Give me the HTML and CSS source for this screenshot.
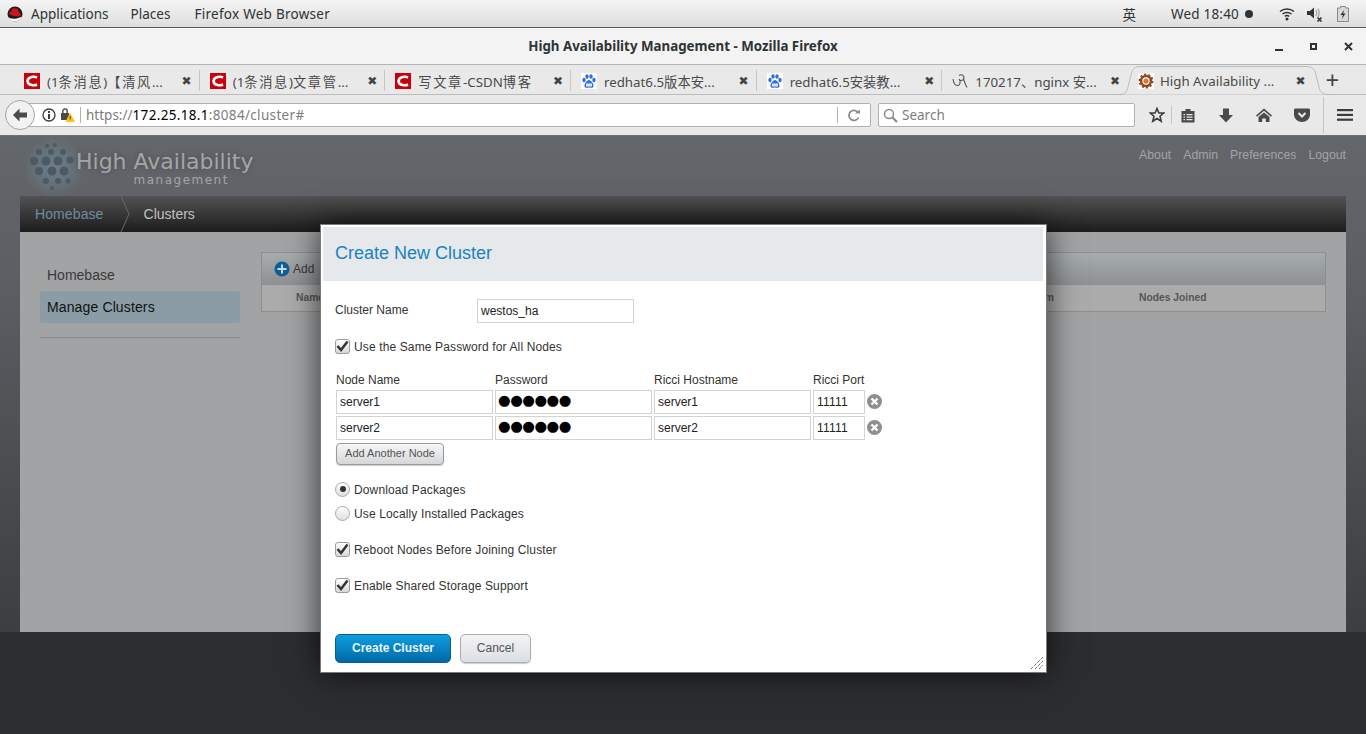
FILE: index.html
```html
<!DOCTYPE html>
<html lang="en">
<head>
    <meta charset="UTF-8">
    <title>High Availability Management - Mozilla Firefox</title>
    <link rel="stylesheet" href="styles.css">
</head>
<body>
    <!-- GNOME top bar -->
    <div class="topbar">
        <svg class="rh-logo" width="16" height="16" viewBox="0 0 16 16">
            <circle cx="8" cy="8" r="7.500" fill="#1c1c1c"/>
            <path d="M0.800 10.500C3 13 8 14 15 10.500C14 14 11 15.500 8 15.500C4.500 15.500 1.800 13.500 0.800 10.500Z" fill="#f4f4f4"/>
            <path d="M2 7.500C2.500 6 3.500 5.800 4.500 5.500C5 3 6 1.800 7.500 2.200C8.500 2.500 9.500 2.500 10 2.500C11 2.800 11.500 5 12 6.500C13 7 14 7.800 13.800 9C13 10.500 10 10.800 7.500 10C5 9.200 2 8.500 2 7.500Z" fill="#d3121f"/>
        </svg>
        <span class="topbar-item first">Applications</span>
        <span class="topbar-item">Places</span>
        <span class="topbar-item app-name">Firefox Web Browser</span>
        <div class="topbar-right">
            <span class="ime">英</span>
            <span class="clock">Wed 18:40</span>
            <span class="clock-dot"></span>
            <svg class="tray wifi" width="16" height="14" viewBox="0 0 16 14" fill="none" stroke="#2e3436" stroke-width="1.500">
                <path d="M1 4.500C5 1 11 1 15 4.500"/>
                <path d="M3.500 7C6 5 10 5 12.500 7"/>
                <path d="M5.800 9.300C7 8.500 9 8.500 10.200 9.300"/>
                <circle cx="8" cy="12" r="1.500" fill="#2e3436" stroke="none"/>
            </svg>
            <svg class="tray vol" width="17" height="16" viewBox="0 0 17 16">
                <path d="M1 5H4L8 1.500V12.500L4 9H1Z" fill="#2e3436"/>
                <path d="M10 4C11 6 11 8 10 10M12 2.500C13.500 5.500 13.500 8.500 12 11.500" fill="none" stroke="#a0a0a0" stroke-width="1.200"/>
                <path d="M11.500 11.500L15.500 15.500M15.500 11.500L11.500 15.500" stroke="#2e3436" stroke-width="1.600"/>
            </svg>
            <svg class="tray batt" width="12" height="16" viewBox="0 0 12 16">
                <path d="M3.500 0.500H8.500V2H11.500V15.500H0.500V2H3.500Z" fill="#d8d8d8" stroke="#8a8a8a"/>
                <path d="M7 4L3.500 9H5.800L5 13L8.500 7.500H6.200Z" fill="#2e3436"/>
            </svg>
        </div>
    </div>

    <!-- Window title -->
    <div class="titlebar">
        <span class="title">High Availability Management - Mozilla Firefox</span>
        <div class="win-buttons">
            <svg width="9" height="9" viewBox="0 0 9 9"><rect x="0" y="7" width="8" height="2" fill="#2e3436"/></svg>
            <svg width="8" height="8" viewBox="0 0 8 8"><rect x="1" y="1" width="5" height="5" fill="none" stroke="#2e3436" stroke-width="2"/></svg>
            <svg width="9" height="9" viewBox="0 0 9 9"><path d="M1 1L8 8M8 1L1 8" stroke="#2e3436" stroke-width="2"/></svg>
        </div>
    </div>

    <!-- Tabs -->
    <div class="tabstrip">
        <div class="tab">
            <svg class="fav" viewBox="0 0 16 16"><rect width="16" height="16" fill="#c8000b"/><path d="M13 4.500C11 3.500 4 3 3.500 8C4 13 11 12.500 13 11.500" fill="none" stroke="#fff" stroke-width="2.600"/></svg>
            <span class="tab-label">(1<span class="cjk">条消息</span>)<span class="cjk">【清风</span>...</span>
            <span class="tab-close">✖</span>
        </div>
        <div class="tab">
            <svg class="fav" viewBox="0 0 16 16"><rect width="16" height="16" fill="#c8000b"/><path d="M13 4.500C11 3.500 4 3 3.500 8C4 13 11 12.500 13 11.500" fill="none" stroke="#fff" stroke-width="2.600"/></svg>
            <span class="tab-label">(1<span class="cjk">条消息</span>)<span class="cjk">文章管</span>...</span>
            <span class="tab-close">✖</span>
        </div>
        <div class="tab">
            <svg class="fav" viewBox="0 0 16 16"><rect width="16" height="16" fill="#c8000b"/><path d="M13 4.500C11 3.500 4 3 3.500 8C4 13 11 12.500 13 11.500" fill="none" stroke="#fff" stroke-width="2.600"/></svg>
            <span class="tab-label"><span class="cjk">写文章</span>-CSDN<span class="cjk">博客</span></span>
            <span class="tab-close">✖</span>
        </div>
        <div class="tab">
            <svg class="fav" viewBox="0 0 16 16"><rect width="16" height="16" fill="#fff"/><g fill="#2f6fe0"><ellipse cx="3" cy="7" rx="1.700" ry="2.200"/><ellipse cx="6" cy="3.500" rx="1.700" ry="2.200"/><ellipse cx="10" cy="3.500" rx="1.700" ry="2.200"/><ellipse cx="13" cy="7" rx="1.700" ry="2.200"/><path d="M8 7C10 7 13 11 12.500 13.500C12 15.500 9.500 14.500 8 14.500C6.500 14.500 4 15.500 3.500 13.500C3 11 6 7 8 7Z"/></g><rect x="5" y="10.500" width="6" height="3" fill="#dce8fb"/></svg>
            <span class="tab-label">redhat6.5版本安...</span>
            <span class="tab-close">✖</span>
        </div>
        <div class="tab">
            <svg class="fav" viewBox="0 0 16 16"><rect width="16" height="16" fill="#fff"/><g fill="#2f6fe0"><ellipse cx="3" cy="7" rx="1.700" ry="2.200"/><ellipse cx="6" cy="3.500" rx="1.700" ry="2.200"/><ellipse cx="10" cy="3.500" rx="1.700" ry="2.200"/><ellipse cx="13" cy="7" rx="1.700" ry="2.200"/><path d="M8 7C10 7 13 11 12.500 13.500C12 15.500 9.500 14.500 8 14.500C6.500 14.500 4 15.500 3.500 13.500C3 11 6 7 8 7Z"/></g><rect x="5" y="10.500" width="6" height="3" fill="#dce8fb"/></svg>
            <span class="tab-label">redhat6.5安装教...</span>
            <span class="tab-close">✖</span>
        </div>
        <div class="tab">
            <svg class="fav" viewBox="0 0 16 16" fill="none" stroke="#555" stroke-width="1.100"><path d="M1 6C1.500 10 3 12 5 12.500C8 13 9 9 7.500 6M7 2.500C10 0.500 13 3 11.500 6C10.500 8 8 8 7 6.500M11.500 6C12.500 9 13.500 12 15 14.500"/></svg>
            <span class="tab-label">170217、nginx 安...</span>
            <span class="tab-close">✖</span>
        </div>
        <div class="tab active">
            <svg class="tab-shape" width="210" height="30" viewBox="0 0 210 30"><path d="M0 29.500C6 29.500 8 27 9 22L12 10C13 4 16 1.500 21 1.500H187C193 1.500 196 4 197 10L200 22C201 27 203 29.500 210 29.500" fill="#e9e9e9" stroke="#b7bdc4"/></svg>
            <svg class="fav" viewBox="0 0 16 16"><rect width="16" height="16" fill="#fff"/><circle cx="8" cy="8" r="5" fill="none" stroke="#8d4a25" stroke-width="2.600"/><circle cx="8" cy="8" r="6.700" fill="none" stroke="#8d4a25" stroke-width="1.600" stroke-dasharray="2.200 2"/><circle cx="8" cy="8" r="2.600" fill="#e0752d"/></svg>
            <span class="tab-label">High Availability ...</span>
            <span class="tab-close">✖</span>
        </div>
        <span class="new-tab">+</span>
    </div>

    <!-- Navigation toolbar -->
    <div class="navbar">
        <div class="back-btn">
            <svg width="16" height="14" viewBox="0 0 16 14"><path d="M7.500 0.500L1 7L7.500 13.500V9.500H15V4.500H7.500Z" fill="#4a4a4a"/></svg>
        </div>
        <div class="urlbar">
            <svg class="url-icon" width="14" height="14" viewBox="0 0 14 14"><circle cx="7" cy="7" r="6" fill="none" stroke="#3a3a3a" stroke-width="1.300"/><rect x="6" y="6" width="2" height="5" fill="#3a3a3a"/><rect x="6" y="3" width="2" height="2" fill="#3a3a3a"/></svg>
            <svg class="url-lock" width="15" height="14" viewBox="0 0 15 14"><path d="M1 5H9V12H1Z" fill="#4a4a4a"/><path d="M2.800 5V3C2.800 0.300 7.200 0.300 7.200 3V5" fill="none" stroke="#4a4a4a" stroke-width="1.400"/><path d="M10 4.500L15 14H5.500Z" fill="#fcc31c"/><rect x="9.700" y="8" width="1" height="3.500" fill="#444"/></svg>
            <span class="url-sep"></span>
            <span class="url-text"><span class="scheme">https://</span>172.25.18.1<span class="dim">:8084/cluster#</span></span>
            <span class="url-sep right"></span>
            <svg class="reload" width="14" height="13" viewBox="0 0 14 13" fill="none"><path d="M11.500 8.500A5 5 0 1 1 11 3.500" stroke="#8a8a8a" stroke-width="1.800"/><path d="M8 4.500H13V0.500Z" fill="#8a8a8a"/></svg>
        </div>
        <div class="searchbar">
            <svg width="15" height="15" viewBox="0 0 15 15" fill="none" stroke="#8a8a8a"><circle cx="6" cy="6" r="4.500" stroke-width="1.500"/><path d="M9.500 9.500L14 14" stroke-width="2.200"/></svg>
            <span>Search</span>
        </div>
        <div class="nav-icons">
            <svg class="i-star" width="16" height="16" viewBox="0 0 16 16"><path d="M8 1.500L9.900 6H14.800L11 9.200L12.200 14.200L8 11.500L3.800 14.200L5 9.200L1.200 6H6.100Z" fill="none" stroke="#3c3c3c" stroke-width="1.600"/></svg>
            <span class="nav-sep"></span>
            <svg class="i-list" width="14" height="15" viewBox="0 0 14 15"><path d="M0.500 3H4.500V1H9.500V3H13.500V14.500H0.500Z" fill="#4a4a4a"/><path d="M2.500 6H4V7.300H2.500ZM5.500 6H11.500V7.300H5.500ZM2.500 8.500H4V9.800H2.500ZM5.500 8.500H11.500V9.800H5.500ZM2.500 11H4V12.300H2.500ZM5.500 11H11.500V12.300H5.500Z" fill="#e8e8e8"/></svg>
            <svg class="i-down" width="14" height="15" viewBox="0 0 14 15"><path d="M4 0.500H10V7H14L7 14.500L0 7H4Z" fill="#4a4a4a"/></svg>
            <svg class="i-home" width="16" height="14" viewBox="0 0 16 14"><path d="M8 0.500L16 7.500L15 8.800L8 2.800L1 8.800L0 7.500Z" fill="#4a4a4a"/><path d="M8 4.500L13.500 9V14H9.800V10.500H6.200V14H2.500V9Z" fill="#4a4a4a"/></svg>
            <svg class="i-pocket" width="16" height="14" viewBox="0 0 16 14"><path d="M1.500 0.500H14.500C15.300 0.500 16 1 16 2V6.500C16 11 12 14 8 14C4 14 0 11 0 6.500V2C0 1 0.700 0.500 1.500 0.500Z" fill="#4a4a4a"/><path d="M4.500 5L8 8.500L11.500 5" fill="none" stroke="#e8e8e8" stroke-width="2"/></svg>
            <span class="nav-sep tall"></span>
            <svg class="i-menu" width="16" height="12" viewBox="0 0 16 12"><rect width="16" height="2.200" y="0" fill="#3c3c3c"/><rect width="16" height="2.200" y="4.800" fill="#3c3c3c"/><rect width="16" height="2.200" y="9.600" fill="#3c3c3c"/></svg>
        </div>
    </div>

    <!-- Luci page behind the dialog -->
    <div class="page">
        <div class="page-header">
            <div class="logo">
                <svg class="logo-mark" width="64" height="64" viewBox="0 0 64 64">
                    <defs>
                        <radialGradient id="glow"><stop offset="0" stop-color="#6f8c9f" stop-opacity=".7"/><stop offset="1" stop-color="#6f8c9f" stop-opacity="0"/></radialGradient>
                    </defs>
                    <circle cx="32" cy="32" r="32" fill="url(#glow)"/>
                    <g fill="#4d5a63">
                        <circle cx="25" cy="11" r="2"/><circle cx="33" cy="10" r="2"/><circle cx="17" cy="17" r="3"/><circle cx="29" cy="17" r="3"/><circle cx="41" cy="17" r="3"/>
                        <circle cx="12" cy="26" r="4"/><circle cx="24" cy="26" r="4.500"/><circle cx="36" cy="26" r="4.500"/><circle cx="48" cy="25" r="3.500"/>
                        <circle cx="17" cy="36" r="4"/><circle cx="30" cy="36" r="4.500"/><circle cx="42" cy="36" r="4.500"/>
                        <circle cx="24" cy="46" r="3"/><circle cx="36" cy="46" r="3"/><circle cx="46" cy="46" r="2.500"/><circle cx="30" cy="53" r="2"/>
                    </g>
                </svg>
                <div class="logo-text">
                    <span class="logo-title">High Availability</span>
                    <span class="logo-sub">management</span>
                </div>
            </div>
            <div class="top-links">
                <span>About</span>
                <span>Admin</span>
                <span>Preferences</span>
                <span>Logout</span>
            </div>
        </div>

        <div class="breadcrumb">
            <span class="crumb-link">Homebase</span>
            <svg class="crumb-sep" width="10" height="36" viewBox="0 0 10 36"><path d="M1 0L9 18L1 36" fill="none" stroke="#6a6a6a"/></svg>
            <span class="crumb-current">Clusters</span>
        </div>

        <div class="content">
            <div class="sidebar">
                <div class="side-item">Homebase</div>
                <div class="side-item selected">Manage Clusters</div>
                <div class="side-rule"></div>
            </div>
            <div class="cluster-panel">
                <div class="panel-toolbar">
                    <svg width="16" height="16" viewBox="0 0 16 16"><circle cx="8" cy="8" r="7.500" fill="#0e5f93"/><path d="M7 3.500H9V7H12.500V9H9V12.500H7V9H3.500V7H7Z" fill="#c9dbe6"/></svg>
                    <span>Add</span>
                </div>
                <div class="panel-head">
                    <span class="col-name">Name</span>
                    <span class="col-platform">Platform</span>
                    <span class="col-joined">Nodes Joined</span>
                </div>
            </div>
        </div>
    </div>
    <div class="page-foot"></div>

    <!-- Create cluster dialog -->
    <div class="modal">
        <div class="modal-header">Create New Cluster</div>
        <div class="modal-body">
            <div class="name-row">
                <span class="name-label">Cluster Name</span>
                <div class="field name-field">westos_ha</div>
            </div>

            <label class="check-row same-pass"><span class="checkbox"><svg width="13" height="12" viewBox="0 0 13 12"><path d="M1.500 6L5 10L11.500 1.500" fill="none" stroke="#333" stroke-width="2.500"/></svg></span>Use the Same Password for All Nodes</label>

            <div class="node-grid">
                <span>Node Name</span><span>Password</span><span>Ricci Hostname</span><span>Ricci Port</span><span></span>

                <div class="field">server1</div>
                <div class="field dots">●●●●●●</div>
                <div class="field">server1</div>
                <div class="field port">11111</div>
                <svg class="remove" width="15" height="15" viewBox="0 0 15 15"><circle cx="7.500" cy="7.500" r="7.500" fill="#8f8f8f"/><path d="M4.500 4.500L10.500 10.500M10.500 4.500L4.500 10.500" stroke="#fff" stroke-width="2.400"/></svg>

                <div class="field">server2</div>
                <div class="field dots">●●●●●●</div>
                <div class="field">server2</div>
                <div class="field port">11111</div>
                <svg class="remove" width="15" height="15" viewBox="0 0 15 15"><circle cx="7.500" cy="7.500" r="7.500" fill="#8f8f8f"/><path d="M4.500 4.500L10.500 10.500M10.500 4.500L4.500 10.500" stroke="#fff" stroke-width="2.400"/></svg>
            </div>

            <button class="add-node">Add Another Node</button>

            <label class="check-row download"><span class="radio on"></span>Download Packages</label>
            <label class="check-row local"><span class="radio"></span>Use Locally Installed Packages</label>
            <label class="check-row reboot"><span class="checkbox"><svg width="13" height="12" viewBox="0 0 13 12"><path d="M1.500 6L5 10L11.500 1.500" fill="none" stroke="#333" stroke-width="2.500"/></svg></span>Reboot Nodes Before Joining Cluster</label>
            <label class="check-row shared"><span class="checkbox"><svg width="13" height="12" viewBox="0 0 13 12"><path d="M1.500 6L5 10L11.500 1.500" fill="none" stroke="#333" stroke-width="2.500"/></svg></span>Enable Shared Storage Support</label>

            <div class="modal-actions">
                <button class="btn-create">Create Cluster</button>
                <button class="btn-cancel">Cancel</button>
            </div>
        </div>
        <svg class="grip" width="12" height="12" viewBox="0 0 12 12" stroke="#333" stroke-dasharray="1 1"><path d="M0 12L12 0M4 12L12 4M8 12L12 8"/></svg>
    </div>
</body>
</html>
```

FILE: styles.css
```css
html, body {
    margin: 0;
    padding: 0;
    height: 734px;
    overflow: hidden;
}

body {
    font-family: "Liberation Sans", sans-serif;
    font-size: 12px;
    color: #333;
    background-color: #2c2d2f;
    position: relative;
}

/* GNOME top bar */
.topbar {
    height: 27px;
    display: flex;
    align-items: center;
    background: linear-gradient(#f4f4f4, #dedede);
    border-bottom: 1px solid #55585a;
    font-family: "Noto Sans", "Noto Sans CJK SC", sans-serif;
    font-size: 13.5px;
    color: #2e3436;
}

.rh-logo {
    margin-left: 7px;
}

.topbar-item {
    margin-left: 22px;
}

.topbar-item.first {
    margin-left: 8px;
}

.topbar-item.app-name {
    margin-left: 24px;
    letter-spacing: .27px;
}

.topbar-right {
    margin-left: auto;
    display: flex;
    align-items: center;
}

.ime {
    margin-right: 35px;
}

.clock {
    letter-spacing: .2px;
}

.clock-dot {
    width: 8px;
    height: 8px;
    margin: 0 26px 0 6px;
    border-radius: 50%;
    background-color: #2e3436;
}

.tray.vol {
    margin-left: 11px;
}

.tray.batt {
    margin: 0 17px 0 14px;
}

/* Window title */
.titlebar {
    height: 33px;
    padding-bottom: 2px;
    display: flex;
    align-items: center;
    justify-content: center;
    position: relative;
    background-color: #f3f3f3;
    border-top: 1px solid #fff;
    border-bottom: 1px solid #b4b4b4;
    font-family: "Noto Sans", sans-serif;
    font-size: 13.33px;
    font-weight: bold;
    color: #2e3436;
}

.win-buttons {
    position: absolute;
    right: 13px;
    top: 13px;
    display: flex;
    gap: 26px;
    align-items: center;
}

/* Tabs */
.tabstrip {
    height: 29px;
    padding-left: 14px;
    display: flex;
    background-color: #e9e9e9;
    border-bottom: 1px solid #bdbdbd;
    font-family: "Noto Sans", "Noto Sans CJK SC", sans-serif;
    font-size: 13.3px;
    color: #4a4a4a;
    position: relative;
}

.tab {
    flex: 0 0 185.67px;
    box-sizing: border-box;
    height: 29px;
    display: flex;
    align-items: center;
    padding: 3px 8px 0 10px;
    position: relative;
}

.tab::after {
    content: "";
    position: absolute;
    right: 0;
    top: 5px;
    height: 21px;
    width: 1px;
    background-color: #c6c6c6;
}

.tab:nth-child(6)::after {
    display: none;
}

.tab.active::after {
    display: none;
}

.tab-shape {
    position: absolute;
    left: -9px;
    top: 0;
}

.fav {
    width: 16px;
    height: 16px;
    flex: none;
    position: relative;
}

.tab-label {
    margin-left: 7px;
    white-space: nowrap;
    flex: 1;
    overflow: hidden;
    position: relative;
}

.tab.active .tab-label {
    margin-left: 6px;
}

.cjk {
    letter-spacing: 1.6px;
}

.tab-close {
    font-family: "DejaVu Sans", sans-serif;
    font-size: 12px;
    color: #444;
    position: relative;
}

.new-tab {
    font-size: 24px;
    line-height: 29px;
    margin-left: 12px;
    position: relative;
    color: #444;
}

/* Navigation toolbar */
.navbar {
    height: 40px;
    display: flex;
    align-items: center;
    background-color: #e9e9e9;
    border-bottom: 1px solid #6e7173;
    position: relative;
    font-family: "Noto Sans", sans-serif;
    font-size: 13.5px;
}

.back-btn {
    position: absolute;
    left: 5px;
    top: 5px;
    width: 30px;
    height: 30px;
    box-sizing: border-box;
    border: 1px solid #a4a4a4;
    border-radius: 50%;
    background-color: #f2f2f2;
    display: flex;
    align-items: center;
    justify-content: center;
}

.urlbar {
    margin-left: 20px;
    width: 851px;
    height: 24px;
    box-sizing: border-box;
    display: flex;
    align-items: center;
    background-color: #fff;
    border: 1px solid #b1b1b1;
    border-radius: 2px;
    padding-left: 21px;
}

.url-icon {
    flex: none;
}

.url-lock {
    margin-left: 4px;
    flex: none;
}

.url-sep {
    width: 1px;
    height: 16px;
    margin: 0 5px 0 5px;
    background-color: #b1b1b1;
}

.url-text {
    color: #000;
    white-space: nowrap;
    flex: 1;
    letter-spacing: .33px;
}

.url-text .dim {
    color: #7d7d7d;
}

.url-text .scheme {
    color: #7d7d7d;
    letter-spacing: 0;
}

.url-sep.right {
    margin: 0 9px 0 0;
}

.reload {
    margin-right: 9px;
}

.searchbar {
    margin-left: 7px;
    width: 257px;
    height: 24px;
    box-sizing: border-box;
    display: flex;
    align-items: center;
    gap: 4px;
    padding-left: 4px;
    background-color: #fff;
    border: 1px solid #b1b1b1;
    border-radius: 2px;
    color: #7d7d7d;
}

.nav-icons {
    display: flex;
    align-items: center;
    height: 100%;
    flex: 1;
    position: relative;
}

.i-star { margin-left: 14px; }
.nav-sep { width: 1px; height: 18px; margin-left: 6px; background-color: #c6c6c6; }
.i-list { margin-left: 9px; }
.i-down { margin-left: 24px; }
.i-home { margin-left: 23px; }
.i-pocket { margin-left: 22px; }
.nav-sep.tall { height: 36px; margin-left: 13px; }
.i-menu { margin-left: 13px; }

/* Luci page */
.page {
    height: 496px;
    padding: 0 20px;
    display: flex;
    flex-direction: column;
    background: linear-gradient(#63666a, #5b5e62 30%, #3c3e41);
}

.page-header {
    height: 60px;
    display: flex;
    justify-content: space-between;
    flex: none;
}

.logo {
    display: flex;
    position: relative;
}

.logo-mark {
    margin: -1px 0 0 2px;
    flex: none;
}

.logo-text {
    margin-left: -10px;
    display: flex;
    flex-direction: column;
    align-items: center;
    color: #a3a5a7;
}

.logo-title {
    font-family: "DejaVu Sans", sans-serif;
    font-size: 22px;
    line-height: 25px;
    margin-top: 13px;
    text-shadow: 0 0 6px rgba(0, 0, 0, .25);
}

.logo-sub {
    font-family: "DejaVu Sans", sans-serif;
    font-size: 12px;
    line-height: 12px;
    letter-spacing: 1.5px;
    margin-left: 33px;
}

.top-links {
    display: flex;
    gap: 12px;
    padding-top: 12px;
    color: #a2a4a6;
    line-height: 14px;
    font-size: 12.3px;
}

.breadcrumb {
    height: 36px;
    display: flex;
    align-items: center;
    flex: none;
    padding-left: 15px;
    background: linear-gradient(#525252, #1c1c1c);
    font-size: 14px;
}

.crumb-link {
    color: #6f8c9f;
    letter-spacing: .1px;
}

.crumb-sep {
    margin-left: 16px;
}

.crumb-current {
    margin-left: 14px;
    color: #c0c0c0;
}

.content {
    height: 400px;
    flex: none;
    display: flex;
    padding: 20px 20px 0;
    box-sizing: border-box;
    background-color: #a2a3a5;
}

.sidebar {
    width: 200px;
    flex: none;
    font-size: 14px;
}

.side-item {
    height: 32px;
    line-height: 32px;
    padding-left: 7px;
    color: #3a3a3a;
    margin-top: 7px;
}

.side-item.selected {
    margin-top: 0;
    color: #111;
    background-color: #8c9ca6;
    border-radius: 2px;
    letter-spacing: .13px;
}

.side-rule {
    height: 1px;
    margin-top: 14px;
    background-color: #88898b;
}

.cluster-panel {
    margin-left: 21px;
    width: 1065px;
    height: 60px;
    box-sizing: border-box;
    border: 1px solid #8d8e90;
}

.panel-toolbar {
    height: 32px;
    display: flex;
    align-items: center;
    gap: 3px;
    padding-left: 12px;
    background: linear-gradient(#a6acac, #8e9092);
    color: #3a3a3a;
}

.panel-head {
    height: 26px;
    line-height: 25px;
    position: relative;
    display: grid;
    grid-template-columns: 34px 758px 100px;
    padding-left: 34px;
    background-color: #ababab;
    font-size: 10.3px;
    font-weight: bold;
    color: #555;
}

.col-platform {
    text-align: right;
    grid-column: 2;
    width: 758px;
    margin-left: -34px;
}

.col-name {
    grid-column: 1;
}

.col-joined {
    grid-column: 3;
    white-space: nowrap;
    margin-left: 51px;
}

.page-foot {
    height: 102px;
    background-color: #2c2d2f;
}

/* Dialog */
.modal {
    position: absolute;
    left: 320px;
    top: 224px;
    width: 727px;
    height: 449px;
    box-sizing: border-box;
    padding: 2px 3px 0 2px;
    background-color: #fff;
    border: 1px solid #7a7a7a;
    box-shadow: 0 0 30px rgba(0, 0, 0, .7);
}

.modal-header {
    height: 54px;
    line-height: 52px;
    padding-left: 12px;
    background-color: #e5e9ec;
    font-size: 18px;
    color: #1a82c0;
}

.modal-body {
    padding-left: 12px;
}

.name-row {
    margin-top: 18px;
    display: flex;
    align-items: center;
}

.name-label {
    width: 142px;
    margin-top: -3px;
}

.field {
    height: 24px;
    line-height: 23px;
    box-sizing: border-box;
    border: 1px solid #d3d3d3;
    padding-left: 3px;
    color: #222;
    overflow: hidden;
}

.name-field {
    width: 157px;
}

.field.port {
    letter-spacing: .2px;
}

.check-row {
    display: flex;
    align-items: center;
    height: 16px;
    gap: 4px;
    white-space: nowrap;
    letter-spacing: .13px;
}

.checkbox {
    width: 15px;
    height: 15px;
    box-sizing: border-box;
    flex: none;
    display: flex;
    align-items: center;
    justify-content: center;
    margin-top: -2px;
    border: 1px solid #9c9c9c;
    border-radius: 3px;
    background: linear-gradient(#fff, #d8d8d8);
}

.radio {
    width: 15px;
    height: 15px;
    box-sizing: border-box;
    flex: none;
    margin-top: -2px;
    border: 1px solid #a8a8a8;
    border-radius: 50%;
    background: linear-gradient(#fff, #dedede);
    position: relative;
}

.radio.on::after {
    content: "";
    position: absolute;
    left: 3.500px;
    top: 3.500px;
    width: 6px;
    height: 6px;
    border-radius: 50%;
    background-color: #333;
}

.same-pass { margin-top: 16px; }
.download { margin-top: 17px; }
.local { margin-top: 8px; }
.reboot { margin-top: 20px; }
.shared { margin-top: 20px; }

.node-grid {
    display: grid;
    grid-template-columns: 157px 157px 157px 52px 15px;
    column-gap: 2px;
    row-gap: 2px;
    margin: 18px 0 0 1px;
    align-items: center;
}

.node-grid > span {
    line-height: 14px;
    padding-bottom: 1px;
}

.remove {
    margin-top: -2px;
}

.field.dots {
    font-family: "DejaVu Sans", sans-serif;
    font-size: 14.5px;
    line-height: 19px;
    color: #000;
    letter-spacing: -.5px;
    padding-left: 2px;
}

.add-node {
    display: block;
    margin: 3px 0 0 1px;
    width: 108px;
    height: 22px;
    padding: 0 0 2px;
    border: 1px solid #9a9a9a;
    border-radius: 4px;
    background: linear-gradient(#f6f6f6, #d4d6d8);
    box-shadow: 0 1px 1px rgba(0, 0, 0, .2);
    font-family: "Liberation Sans", sans-serif;
    font-size: 11px;
    color: #555;
}

.modal-actions {
    display: flex;
    gap: 9px;
    margin-top: 40px;
}

.btn-create {
    width: 116px;
    height: 29px;
    padding: 0 0 2px;
    border: 1px solid #0a5d92;
    border-radius: 5px;
    background: linear-gradient(#0d9ee0, #0268a6);
    font-family: "Liberation Sans", sans-serif;
    font-size: 12px;
    font-weight: bold;
    color: #e6f3fa;
}

.btn-cancel {
    width: 71px;
    height: 29px;
    padding: 0 0 2px;
    border: 1px solid #adadad;
    border-radius: 5px;
    background: linear-gradient(#f2f3f4, #dcdfe2);
    box-shadow: 0 1px 1px rgba(0, 0, 0, .2);
    font-family: "Liberation Sans", sans-serif;
    font-size: 12px;
    color: #555;
}

.grip {
    position: absolute;
    right: 3px;
    bottom: 3px;
}
```
